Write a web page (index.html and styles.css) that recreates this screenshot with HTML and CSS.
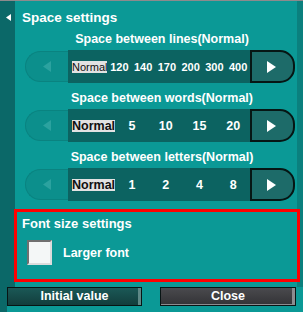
FILE: index.html
```html
<!DOCTYPE html>
<html lang="en">
<head>
    <meta charset="UTF-8">
    <meta name="viewport" content="width=device-width, initial-scale=1.0">
    <title>Display settings</title>
    <link rel="stylesheet" href="styles.css">
</head>
<body>
    <div class="window">
        <aside class="side">
            <svg class="back" width="5" height="7" viewBox="0 0 5 7"><polygon points="5,0 5,7 0,3.5" fill="#fff"/></svg>
        </aside>
        <main class="panel">
            <h2 class="title">Space settings</h2>

            <div class="group">
                <p class="caption">Space between lines(Normal)</p>
                <div class="stepper">
                    <span class="step prev"><svg width="8" height="11" viewBox="0 0 8 11"><polygon points="8,0 8,11 0,5.5" fill="#2ba29f"/></svg></span>
                    <div class="options small">
                        <span class="opt current">Normal</span>
                        <span class="opt">120</span>
                        <span class="opt">140</span>
                        <span class="opt">170</span>
                        <span class="opt">200</span>
                        <span class="opt">300</span>
                        <span class="opt">400</span>
                    </div>
                    <span class="step next"><svg width="9" height="12" viewBox="0 0 9 12"><polygon points="0,0 9,6 0,12" fill="#fff"/></svg></span>
                </div>
            </div>

            <div class="group">
                <p class="caption">Space between words(Normal)</p>
                <div class="stepper">
                    <span class="step prev"><svg width="8" height="11" viewBox="0 0 8 11"><polygon points="8,0 8,11 0,5.5" fill="#2ba29f"/></svg></span>
                    <div class="options">
                        <span class="opt current">Normal</span>
                        <span class="opt">5</span>
                        <span class="opt">10</span>
                        <span class="opt">15</span>
                        <span class="opt">20</span>
                    </div>
                    <span class="step next"><svg width="9" height="12" viewBox="0 0 9 12"><polygon points="0,0 9,6 0,12" fill="#fff"/></svg></span>
                </div>
            </div>

            <div class="group">
                <p class="caption">Space between letters(Normal)</p>
                <div class="stepper">
                    <span class="step prev"><svg width="8" height="11" viewBox="0 0 8 11"><polygon points="8,0 8,11 0,5.5" fill="#2ba29f"/></svg></span>
                    <div class="options">
                        <span class="opt current">Normal</span>
                        <span class="opt">1</span>
                        <span class="opt">2</span>
                        <span class="opt">4</span>
                        <span class="opt">8</span>
                    </div>
                    <span class="step next"><svg width="9" height="12" viewBox="0 0 9 12"><polygon points="0,0 9,6 0,12" fill="#fff"/></svg></span>
                </div>
            </div>

            <section class="font-size">
                <h3 class="title">Font size settings</h3>
                <label class="check">
                    <span class="box"></span>
                    <span>Larger font</span>
                </label>
            </section>
        </main>
    </div>
    <footer class="actions">
        <button class="btn reset">Initial value</button>
        <button class="btn close">Close</button>
    </footer>
</body>
</html>
```

FILE: styles.css
```css
body {
    margin: 0;
    width: 303px;
    height: 312px;
    overflow: hidden;
    box-sizing: border-box;
    border-top: 1px solid #8e8a8c;
    background-color: #0b9996;
    font-family: "Liberation Sans", Arial, sans-serif;
    color: #fff;
}
.window {
    display: flex;
    height: 286px;
    border-right: 6px solid #0b807e;
}
.side {
    width: 15px;
    flex: 0 0 15px;
    background-color: #0b6868;
}
.back {
    display: block;
    margin: 13px 0 0 6px;
}
.panel {
    flex: 1;
    padding: 9px 2px 0 10px;
}
.title {
    margin: 0 0 5px -3px;
    font-size: 13.5px;
    line-height: 16px;
    font-weight: bold;
}
.group {
    margin-bottom: 7px;
}
.caption {
    margin: 0 0 3px;
    padding-left: 4px;
    text-align: center;
    font-size: 12.5px;
    line-height: 16px;
    font-weight: bold;
}
.stepper {
    display: flex;
    align-items: center;
    height: 33px;
}
.step {
    display: flex;
    align-items: center;
    justify-content: center;
    box-sizing: border-box;
}
.prev {
    width: 43px;
    height: 31px;
    background-color: #0c8f8c;
    border: 1px solid #0a8380;
    border-right: none;
    border-radius: 16px 0 0 16px;
}
.next {
    width: 45px;
    height: 33px;
    padding-right: 3px;
    background-color: #1d6b69;
    border: 2px solid #061614;
    border-radius: 0 15px 15px 0;
}
.options {
    display: flex;
    align-items: center;
    width: 182px;
    height: 33px;
    box-sizing: border-box;
    padding-left: 4px;
    background-color: #0c6361;
    font-size: 12.5px;
    font-weight: bold;
}
.opt {
    flex: 1;
    text-align: center;
}
.opt.current {
    flex: none;
    line-height: 12px;
    margin-top: 1px;
    background-color: #e2e2e2;
    color: #111;
}
.options.small {
    font-size: 11px;
}
.options.small .current {
    font-weight: normal;
}
.font-size {
    margin: 8px -5px 0 -11px;
    padding: 4px 5px 14px;
    border: 3px solid #ff0000;
}
.font-size .title {
    margin: 0 0 8px;
    font-size: 13px;
}
.check {
    display: flex;
    align-items: center;
    gap: 11px;
    padding-left: 5px;
    font-size: 12.5px;
    font-weight: bold;
}
.box {
    width: 25px;
    height: 25px;
    box-sizing: border-box;
    background-color: #f4f7f7;
    border: 2px solid;
    border-color: #707070 #dcdcdc #dcdcdc #707070;
}
.actions {
    display: flex;
    gap: 18px;
    height: 25px;
    padding-left: 7px;
    background: linear-gradient(90deg, #0b6868 7px, transparent 7px);
}
.btn {
    width: 135px;
    height: 19px;
    padding: 0;
    border: 1px solid #081414;
    color: #fff;
    font-family: inherit;
    font-size: 12.5px;
    font-weight: bold;
    line-height: 17px;
}
.reset {
    background: linear-gradient(#1b5856, #123e3d);
    box-shadow: inset -3px 0 #5e8886;
}
.close {
    width: 136px;
    background: linear-gradient(#4a4a4e, #333336);
    box-shadow: inset -3px -1px #8c8c90;
}
```
